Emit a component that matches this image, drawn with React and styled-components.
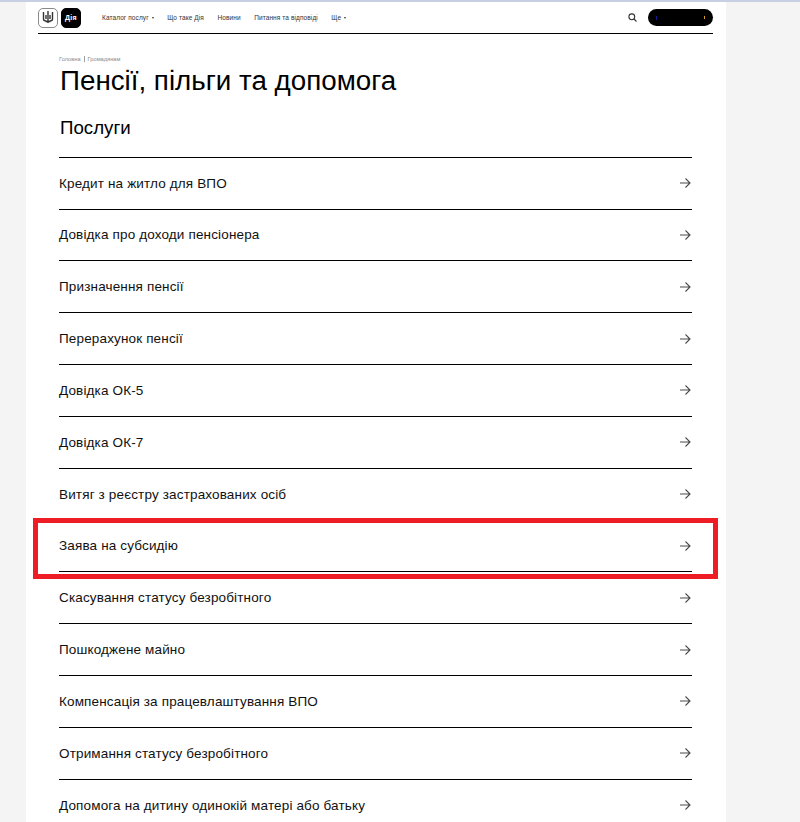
import React from 'react';
import styled, { createGlobalStyle } from 'styled-components';

const GlobalStyle = createGlobalStyle`
  html, body {
    margin: 0;
    padding: 0;
    height: 100%;
    overflow: hidden;
    background: #f4f4f4;
    font-family: 'Liberation Sans', Arial, sans-serif;
    color: #000;
  }
`;

const Page = styled.div`
  position: relative;
  height: 822px;
  overflow: hidden;
  border-top: 2px solid #c6d0e2;
  box-sizing: border-box;
`;

const Sheet = styled.main`
  width: 700px;
  height: 820px;
  margin-left: 26px;
  background: #fff;
  box-sizing: border-box;
  padding: 0 13px 0 12px;
`;

const Header = styled.header`
  display: flex;
  align-items: center;
  height: 31px;
  border-bottom: 1px solid #000;
`;

const Logos = styled.div`
  display: flex;
  gap: 3px;
  margin-right: 21px;
`;

const LogoBox = styled.div`
  width: 20px;
  height: 20px;
  box-sizing: border-box;
  border-radius: 5px;
  display: flex;
  align-items: center;
  justify-content: center;
  background: ${({ $dark }) => ($dark ? '#000' : '#fff')};
  border: 1px solid ${({ $dark }) => ($dark ? '#000' : '#8a8a8a')};
  color: #fff;
  font-size: 7px;
  letter-spacing: 0.3px;
  font-weight: 700;
`;

const Nav = styled.nav`
  display: flex;
  align-items: center;
  gap: 13.5px;
  font-size: 6.5px;
  letter-spacing: 0.1px;
  color: #333;
`;

const NavItem = styled.span`
  display: flex;
  align-items: center;
  gap: 3px;
  white-space: nowrap;
`;

const Caret = styled.i`
  width: 0;
  height: 0;
  margin-top: 1px;
  border-left: 1.5px solid transparent;
  border-right: 1.5px solid transparent;
  border-top: 2px solid #333;
`;

const HeaderRight = styled.div`
  margin-left: auto;
  display: flex;
  align-items: center;
  gap: 11px;
`;

const CabinetButton = styled.div`
  width: 65px;
  height: 17px;
  border-radius: 9px;
  background: #000;
  display: flex;
  align-items: center;
  justify-content: space-between;
  padding: 0 8px;
  box-sizing: border-box;
`;

const CabinetMark = styled.span`
  width: 1px;
  height: ${({ $tall }) => ($tall ? '4px' : '3px')};
  background: ${({ $color }) => $color};
`;

const Content = styled.div`
  padding: 21px 21px 0 21px;
`;

const Breadcrumbs = styled.div`
  display: flex;
  align-items: center;
  gap: 3px;
  height: 7px;
  font-size: 5.7px;
  color: #8b8b8b;
`;

const CrumbDivider = styled.span`
  width: 1px;
  height: 6px;
  background: #a0a0a0;
`;

const Title = styled.h1`
  margin: 3px 0 0 1px;
  font-size: 27.75px;
  line-height: 32px;
  font-weight: 400;
`;

const Section = styled.h2`
  margin: 19px 0 0 1px;
  font-size: 18.7px;
  line-height: 24px;
  font-weight: 400;
`;

const ServiceList = styled.ul`
  list-style: none;
  margin: 16.75px 0 0;
  padding: 0;
  border-top: 1px solid #000;
`;

const ServiceRow = styled.li`
  display: flex;
  align-items: center;
  justify-content: space-between;
  box-sizing: border-box;
  height: 51.83px;
  border-bottom: 1px solid #000;
  font-size: 13.5px;
  letter-spacing: 0.15px;
  color: #111;
`;

const Arrow = styled.svg`
  width: 11px;
  height: 10px;
  margin-right: 1px;
  flex: none;
  color: #4a4a4a;
`;

const Highlight = styled.div`
  position: absolute;
  left: 33px;
  top: 516px;
  width: 685px;
  height: 61px;
  box-sizing: border-box;
  border: 5px solid #ee1c25;
  pointer-events: none;
`;

const services = [
  'Кредит на житло для ВПО',
  'Довідка про доходи пенсіонера',
  'Призначення пенсії',
  'Перерахунок пенсії',
  'Довідка ОК-5',
  'Довідка ОК-7',
  'Витяг з реєстру застрахованих осіб',
  'Заява на субсидію',
  'Скасування статусу безробітного',
  'Пошкоджене майно',
  'Компенсація за працевлаштування ВПО',
  'Отримання статусу безробітного',
  'Допомога на дитину одинокій матері або батьку',
];

const Trident = () => (
  <svg width="12" height="15" viewBox="0 0 12 15" fill="none" stroke="#333" strokeWidth="1.4">
    <path d="M1.500 2v7c0 1.500 1.500 2 3 2M10.500 2v7c0 1.500-1.500 2-3 2M6 1v12M4 5v4M8 5v4M3.500 11.500h5" />
  </svg>
);

const SearchIcon = () => (
  <svg width="9" height="9" viewBox="0 0 9 9" fill="none" stroke="#333" strokeWidth="1.1">
    <circle cx="3.800" cy="3.800" r="2.900" />
    <path d="M6 6l2.500 2.500" />
  </svg>
);

const ArrowIcon = () => (
  <Arrow viewBox="0 0 11 10" fill="none" stroke="currentColor" strokeWidth="1.1">
    <path d="M0 5h10M5.500 0.500l4.500 4.500-4.500 4.500" />
  </Arrow>
);

const App = () => (
  <>
    <GlobalStyle />
    <Page>
      <Sheet>
        <Header>
          <Logos>
            <LogoBox><Trident /></LogoBox>
            <LogoBox $dark>Дія</LogoBox>
          </Logos>
          <Nav>
            <NavItem>Каталог послуг <Caret /></NavItem>
            <NavItem>Що таке Дія</NavItem>
            <NavItem>Новини</NavItem>
            <NavItem>Питання та відповіді</NavItem>
            <NavItem>Ще <Caret /></NavItem>
          </Nav>
          <HeaderRight>
            <SearchIcon />
            <CabinetButton>
              <CabinetMark $tall $color="#1a1a8c" />
              <CabinetMark $color="#d9a520" />
            </CabinetButton>
          </HeaderRight>
        </Header>
        <Content>
          <Breadcrumbs>
            <span>Головна</span>
            <CrumbDivider />
            <span>Громадянам</span>
          </Breadcrumbs>
          <Title>Пенсії, пільги та допомога</Title>
          <Section>Послуги</Section>
          <ServiceList>
            {services.map((name) => (
              <ServiceRow key={name}>
                {name}
                <ArrowIcon />
              </ServiceRow>
            ))}
          </ServiceList>
        </Content>
      </Sheet>
      <Highlight />
    </Page>
  </>
);

export default App;
